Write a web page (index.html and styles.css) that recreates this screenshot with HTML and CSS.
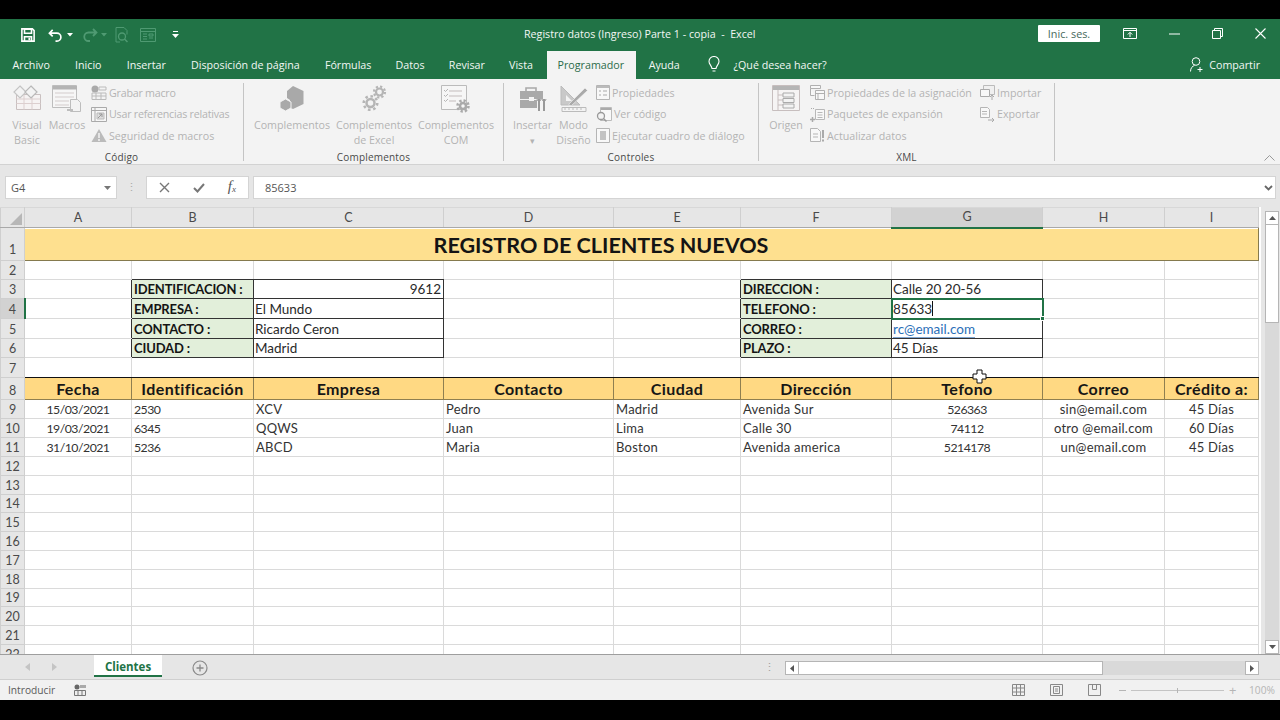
FILE: index.html
```html
<!DOCTYPE html>
<html lang="es">
<head>
<meta charset="utf-8">
<title>Registro datos (Ingreso) Parte 1 - copia - Excel</title>
<link rel="stylesheet" href="styles.css">
</head>
<body>
<div class="app">
  <header class="titlebar">
    <div class="qat">
      <svg class="q-save" width="14" height="14" viewBox="0 0 16 16"><path d="M1 1h12l2 2v12H1z" fill="none" stroke="#fff" stroke-width="1.8"/><path d="M4 1.500h8v4.500H4zM4 15v-5h8v5" fill="none" stroke="#fff" stroke-width="1.8"/><rect x="8.500" y="11" width="2" height="3" fill="#fff"/></svg>
      <svg class="q-undo" width="15" height="15" viewBox="0 0 16 16"><path d="M5 2 1.500 5.500 5 9M2 5.500h7.500a4 4 0 0 1 0 8.500H8" fill="none" stroke="#fff" stroke-width="1.800"/></svg>
      <svg class="q-arrow" width="6" height="4" viewBox="0 0 6 4"><path d="M0 0h6L3 3.500z" fill="#fff"/></svg>
      <svg class="q-redo" width="16" height="16" viewBox="0 0 16 16"><path d="M11 2l3.500 3.500L11 9M14 5.500H6.500a4 4 0 0 0 0 8.500H8" fill="none" stroke="#4f9a72" stroke-width="1.800"/></svg>
      <svg class="q-arrow2" width="6" height="4" viewBox="0 0 6 4"><path d="M0 0h6L3 3.500z" fill="#4f9a72"/></svg>
      <svg class="q-prev" width="14" height="16" viewBox="0 0 14 16"><path d="M1 .500h8l3 3v4M1 .500v14.500h4" fill="none" stroke="#4f9a72"/><circle cx="7" cy="9.500" r="3.500" fill="none" stroke="#4f9a72" stroke-width="1.300"/><path d="m9.500 12 3 3" stroke="#4f9a72" stroke-width="1.500"/></svg>
      <svg class="q-form" width="16" height="14" viewBox="0 0 16 14"><path d="M.5.500h15v13H.5zM.5 3.500h15M3 6h4M3 8.500h4M3 11h4M9 6h4v2H9zM9 10h4" fill="none" stroke="#4f9a72"/></svg>
      <svg class="q-cust" width="7" height="9" viewBox="0 0 7 9"><path d="M1 .500h5" stroke="#fff"/><path d="M0 3h7L3.500 7z" fill="#fff"/></svg>
    </div>
    <div class="doc-title">Registro datos (Ingreso) Parte 1 - copia &nbsp;-&nbsp; Excel</div>
    <div class="win">
      <span class="signin">Inic. ses.</span>
      <svg class="w-disp" width="14" height="11" viewBox="0 0 14 11"><path d="M.5.500h13v10H.5zM.5 2.500h13" fill="none" stroke="#fff"/><path d="M7 9V4.500M4.800 6.500 7 4.300l2.200 2.200" fill="none" stroke="#fff"/></svg>
      <svg class="w-min" width="11" height="2" viewBox="0 0 11 2"><path d="M0 1h11" stroke="#fff" stroke-width="1"/></svg>
      <svg class="w-res" width="11" height="11" viewBox="0 0 11 11"><path d="M.5 2.500h8v8h-8zM2.500 2.500v-2h8v8h-2" fill="none" stroke="#fff"/></svg>
      <svg class="w-close" width="11" height="11" viewBox="0 0 11 11"><path d="m.5.500 10 10M10.500.500l-10 10" stroke="#fff" stroke-width="1.100"/></svg>
    </div>
  </header>

  <nav class="tabs">
    <span class="tab">Archivo</span>
    <span class="tab">Inicio</span>
    <span class="tab">Insertar</span>
    <span class="tab">Disposición de página</span>
    <span class="tab">Fórmulas</span>
    <span class="tab pull">Datos</span>
    <span class="tab pull">Revisar</span>
    <span class="tab pull">Vista</span>
    <span class="tab active">Programador</span>
    <span class="tab">Ayuda</span>
    <svg class="bulb" width="12" height="17" viewBox="0 0 12 17"><path d="M4 12.500C4 10 1 8.500 1 5.500a5 5 0 0 1 10 0c0 3-3 4.500-3 7zM4.500 15h3" fill="none" stroke="#fff" stroke-width="1.100"/></svg>
    <span class="tell">¿Qué desea hacer?</span>
    <span class="share">
      <svg width="14" height="15" viewBox="0 0 14 15"><circle cx="6" cy="4.500" r="3.800" fill="none" stroke="#fff"/><path d="M.5 14.500c0-3.500 2-5.500 4-6M10 10v5M7.500 12.500h5" fill="none" stroke="#fff"/></svg>
      Compartir
    </span>
  </nav>

  <section class="ribbon">
    <div class="group g-codigo">
      <div class="body">
        <div class="large w40">
          <div class="lg-ic"><svg width="28" height="26" viewBox="0 0 28 26"><path d="M3.500 9.500h24v15h-24z" fill="#f6f3f3" stroke="#c9c0c0"/><path d="M3.500 14h24M3.500 18.500h24M11 9.500v15M19 9.500v15" stroke="#dccfcf"/><path d="m7 1 6 6-6 6-6-6z" fill="#f3f3f3" stroke="#c4c4c4" stroke-width="1.200"/><path d="m18 1 6 6-6 6-6-6z" fill="#f3f3f3" stroke="#b8b8b8" stroke-width="1.200"/></svg></div>
          <span>Visual<br>Basic</span>
        </div>
        <div class="large w40">
          <div class="lg-ic"><svg width="30" height="28" viewBox="0 0 30 28"><path d="M.5.500h24v22H.5z" fill="#f6f6f6" stroke="#bdbdbd"/><rect x="1" y="1" width="24" height="3.500" fill="#b4b4b4"/><path d="M3 8h19M3 12h19M3 16h14M3 20h14" stroke="#d3cccc"/><path d="M18.500 14.500h7l3 3v9h-10z" fill="#f3f3f3" stroke="#bdbdbd"/><path d="M15 25h6" stroke="#bdbdbd" stroke-width="2"/></svg></div>
          <span>Macros</span>
        </div>
        <div class="smalls m4">
          <div class="small tight"><svg width="16" height="15" viewBox="0 0 16 15"><circle cx="4" cy="4" r="3.500" fill="#aaa"/><path d="M8 2h7v3H8zM1 8h14v6.500H1zM1 11h14M5 8v6M10 8v6" fill="#f3f3f3" stroke="#bbb"/></svg><span>Grabar macro</span></div>
          <div class="small tight"><svg width="16" height="15" viewBox="0 0 16 15"><path d="M.5.500h15v14H.5zM.5 3.500h15M4 .500v14" fill="#f6f6f6" stroke="#aaa"/><path d="M6 6h7v6H6z" fill="#ddd" stroke="#bbb"/><path d="m7 11 4-4M8 7h3v3" fill="none" stroke="#999"/></svg><span>Usar referencias relativas</span></div>
          <div class="small"><svg width="16" height="15" viewBox="0 0 16 15"><path d="M8 1 15.500 14H.5z" fill="#bbb"/><path d="M8 5v5M8 11v2" stroke="#f3f3f3" stroke-width="1.500"/></svg><span>Seguridad de macros</span></div>
        </div>
      </div>
      <div class="g-label">Código</div>
    </div>

    <div class="group g-comp">
      <div class="body">
        <div class="large w82">
          <div class="lg-ic"><svg width="26" height="26" viewBox="0 0 26 26"><path d="M14 1 24.500 6v13L14 24l-3-1.500V15l-3-2V6z" fill="#a9a9a9"/><path d="M6.500 14 12 17v6l-5.500 3L1 23v-6z" fill="#a9a9a9" stroke="#f3f3f3"/></svg></div>
          <span>Complementos</span>
        </div>
        <div class="large w82">
          <div class="lg-ic"><svg width="26" height="28" viewBox="0 0 26 28"><g fill="none" stroke="#b5b5b5"><circle cx="18.500" cy="7" r="3.500" stroke-width="2.200"/><circle cx="18.500" cy="7" r="5.500" stroke-width="2.200" stroke-dasharray="2.200 2.100"/><circle cx="9.500" cy="18" r="4" stroke-width="2.500"/><circle cx="9.500" cy="18" r="6.800" stroke-width="2.500" stroke-dasharray="2.600 2.700"/></g></svg></div>
          <span>Complementos<br>de Excel</span>
        </div>
        <div class="large w82">
          <div class="lg-ic"><svg width="30" height="30" viewBox="0 0 30 30"><path d="M.5.500h25v24H.5z" fill="#f6f6f6" stroke="#bbb"/><path d="M8 6h13M8 11h13M8 16h7" stroke="#c3bcbc"/><path d="m3 5 1.500 1.500L7 4M3 10l1.500 1.500L7 9M3 15l1.500 1.500L7 14" fill="none" stroke="#b5b5b5"/><circle cx="22" cy="21" r="3" fill="none" stroke="#aaa" stroke-width="2.500"/><circle cx="22" cy="21" r="5.500" fill="none" stroke="#aaa" stroke-width="2.500" stroke-dasharray="2.300 2"/></svg></div>
          <span>Complementos<br>COM</span>
        </div>
      </div>
      <div class="g-label">Complementos</div>
    </div>

    <div class="group g-ctrl">
      <div class="body">
        <div class="large w38">
          <div class="lg-ic"><svg width="28" height="28" viewBox="0 0 28 28"><path d="M7 6V3h10v3" fill="none" stroke="#a9a9a9" stroke-width="1.600"/><path d="M1 6h23v8H1zM1 15h17v8H1z" fill="#a9a9a9"/><rect x="10" y="12" width="5" height="4" fill="#f3f3f3"/><path d="M20 14v12M25 14v12" stroke="#999" stroke-width="2"/><path d="M18 14a2 2 0 0 0 4 0M23 14a2 2 0 0 0 4 0" fill="none" stroke="#999"/></svg></div>
          <span>Insertar<br><em class="mini">▾</em></span>
        </div>
        <div class="large w38">
          <div class="lg-ic"><svg width="30" height="28" viewBox="0 0 30 28"><path d="M2 1v19h19z" fill="#c9c9c9" stroke="#bbb"/><path d="M7 10v6h6z" fill="#f3f3f3"/><path d="m10 19 16-16 2.500 2.500-16 15H10z" fill="#aaa" stroke="#f3f3f3" stroke-width=".6"/><path d="M3 22.500h24v4H3z" fill="#f3f3f3" stroke="#bbb"/><path d="M6 23v2M10 23v2M14 23v2M18 23v2M22 23v2" stroke="#bbb"/></svg></div>
          <span>Modo<br>Diseño</span>
        </div>
        <div class="smalls m3">
          <div class="small"><svg width="14" height="15" viewBox="0 0 14 15"><path d="M.5.500h13v14H.5z" fill="#f8f8f8" stroke="#b5b5b5"/><path d="M1 1h12v2H1z" fill="#bbb"/><path d="M3 6h2M3 10h2M7 6h4M7 10h4" stroke="#aaa"/></svg><span>Propiedades</span></div>
          <div class="small"><svg width="16" height="15" viewBox="0 0 16 15"><path d="M4.500.500h11v13h-11z" fill="#f8f8f8" stroke="#bbb"/><path d="M5 1h10v2H5z" fill="#aaa"/><circle cx="5" cy="9" r="3.500" fill="#f3f3f3" stroke="#999" stroke-width="1.300"/><path d="m7.500 11.500 3 3" stroke="#999" stroke-width="1.500"/></svg><span>Ver código</span></div>
          <div class="small"><svg width="14" height="15" viewBox="0 0 14 15"><path d="M.5.500h13v14H.5z" fill="#f8f8f8" stroke="#b5b5b5"/><path d="M4 3h6v9H4z" fill="#c3c3c3"/></svg><span>Ejecutar cuadro de diálogo</span></div>
        </div>
      </div>
      <div class="g-label">Controles</div>
    </div>

    <div class="group g-xml">
      <div class="body">
        <div class="large w34">
          <div class="lg-ic"><svg width="28" height="26" viewBox="0 0 28 26"><path d="M.5.500h27v25H.5z" fill="#f6f4f4" stroke="#c7bebe"/><path d="M1 1h26v4H1z" fill="#b5b5b5"/><path d="M6 5v20M6 10h5M6 15h5M6 20h5" stroke="#c7bebe"/><path d="M11 8h11v4H11zM11 13.500h11v4H11zM11 19h11v4H11z" fill="#f3f3f3" stroke="#aaa"/></svg></div>
          <span>Origen</span>
        </div>
        <div class="smalls m6 col-xml">
          <div class="small"><svg width="15" height="15" viewBox="0 0 15 15"><path d="M.5.500h10v3h-10zM.5 3.500v7h4M5.500 5.500h9v9h-9zM5.500 8.500h9M8 8.500v6" fill="#f8f8f8" stroke="#b0b0b0"/></svg><span>Propiedades de la asignación</span></div>
          <div class="small"><svg width="15" height="15" viewBox="0 0 15 15"><path d="M5.500 2.500h9v10h-9zM7.500 5.500h5M7.500 8h5M7.500 10.500h5" fill="#f8f8f8" stroke="#b8b8b8"/><path d="M0 12.500h5M2.500 10v5" stroke="#aaa" stroke-width="1.500"/><path d="M1 1.500h3" stroke="#aaa" stroke-dasharray="1 1"/></svg><span>Paquetes de expansión</span></div>
          <div class="small"><svg width="15" height="15" viewBox="0 0 15 15"><path d="M.5.500h7l3 3v10h-10z" fill="#f8f8f8" stroke="#b5b5b5"/><path d="M3 6h5M3 9h5" stroke="#b5b5b5"/><path d="M13 2v8M13 11.500v2" stroke="#aaa" stroke-width="2"/></svg><span>Actualizar datos</span></div>
        </div>
        <div class="smalls col-imp">
          <div class="small"><svg width="15" height="15" viewBox="0 0 15 15"><path d="M3.500.500h11v9h-11z" fill="#f0f0f0" stroke="#bbb"/><path d="M.5 4.500h9v7h-9z" fill="#f8f8f8" stroke="#aaa"/><path d="M12 15v-5M10 12l2-2 2 2" fill="none" stroke="#aaa"/></svg><span>Importar</span></div>
          <div class="small"><svg width="15" height="15" viewBox="0 0 15 15"><path d="M.5.500h7l2 2v8h-9z" fill="#f8f8f8" stroke="#b5b5b5"/><path d="M2 4.500h5M2 7h5" stroke="#b5b5b5"/><path d="M8 13h6M12 11l2 2-2 2" fill="none" stroke="#aaa"/></svg><span>Exportar</span></div>
        </div>
      </div>
      <div class="g-label">XML</div>
    </div>
    <svg class="collapse" width="11" height="6" viewBox="0 0 11 6"><path d="m.5 5.500 5-5 5 5" fill="none" stroke="#999"/></svg>
  </section>

  <section class="formula">
    <div class="namebox"><span>G4</span><svg width="7" height="4" viewBox="0 0 7 4"><path d="M0 0h7L3.500 4z" fill="#777"/></svg></div>
    <div class="grip">⋮</div>
    <div class="fx-btns">
      <svg width="11" height="11" viewBox="0 0 11 11"><path d="m1 1 9 9M10 1l-9 9" stroke="#777" stroke-width="1.400"/></svg>
      <svg width="12" height="10" viewBox="0 0 12 10"><path d="m1 5 3.500 3.500L11 1" fill="none" stroke="#777" stroke-width="2"/></svg>
      <span class="fx">f<sub>x</sub></span>
    </div>
    <div class="fx-input"><span>85633</span><svg width="9" height="6" viewBox="0 0 9 6"><path d="m1 1 3.500 3.500L8 1" fill="none" stroke="#666" stroke-width="1.800"/></svg></div>
  </section>

  <main class="sheetwrap">
    <div class="sheet">
      <table class="grid">
        <colgroup>
          <col class="c0"><col class="ca"><col class="cb"><col class="cc"><col class="cd"><col class="ce"><col class="cf"><col class="cg"><col class="ch"><col class="ci">
        </colgroup>
        <tr class="heads"><th class="corner"><svg width="12" height="12" viewBox="0 0 12 12"><path d="M12 0v12H0z" fill="#b7b7b7"/></svg></th><th>A</th><th>B</th><th>C</th><th>D</th><th>E</th><th>F</th><th class="sel-col">G</th><th>H</th><th>I</th></tr>
        <tr class="r1"><th>1</th><td class="banner" colspan="9">REGISTRO DE CLIENTES NUEVOS</td></tr>
        <tr class="r19"><th>2</th><td></td><td class="bb"></td><td class="bb"></td><td></td><td></td><td class="bb"></td><td class="bb"></td><td></td><td></td></tr>
        <tr class="r19"><th>3</th><td class="br"></td><td class="lbl">IDENTIFICACION :</td><td class="val num">9612</td><td></td><td class="br"></td><td class="lbl">DIRECCION :</td><td class="val">Calle 20 20-56</td><td></td><td></td></tr>
        <tr class="r20"><th class="sel-row">4</th><td class="br"></td><td class="lbl">EMPRESA :</td><td class="val">El Mundo</td><td></td><td class="br"></td><td class="lbl">TELEFONO :</td><td class="val active-cell">85633<i class="caret"></i><i class="handle"></i></td><td></td><td></td></tr>
        <tr class="r20"><th>5</th><td class="br"></td><td class="lbl">CONTACTO :</td><td class="val">Ricardo Ceron</td><td></td><td class="br"></td><td class="lbl">CORREO :</td><td class="val"><a class="link">rc@email.com</a></td><td></td><td></td></tr>
        <tr class="r19"><th>6</th><td class="br"></td><td class="lbl">CIUDAD :</td><td class="val">Madrid</td><td></td><td class="br"></td><td class="lbl">PLAZO :</td><td class="val">45 Días</td><td></td><td></td></tr>
        <tr class="r20 r7"><th>7</th><td></td><td></td><td></td><td></td><td></td><td></td><td></td><td></td><td></td></tr>
        <tr class="r22"><th>8</th><td class="hd">Fecha</td><td class="hd">Identificación</td><td class="hd">Empresa</td><td class="hd">Contacto</td><td class="hd">Ciudad</td><td class="hd">Dirección</td><td class="hd">Tefono</td><td class="hd">Correo</td><td class="hd">Crédito a:</td></tr>
        <tr class="r19 data"><th>9</th><td class="ctr nm">15/03/2021</td><td class="nm">2530</td><td>XCV</td><td>Pedro</td><td>Madrid</td><td>Avenida Sur</td><td class="ctr nm">526363</td><td class="ctr">sin@email.com</td><td class="ctr">45 Días</td></tr>
        <tr class="r19 data"><th>10</th><td class="ctr nm">19/03/2021</td><td class="nm">6345</td><td>QQWS</td><td>Juan</td><td>Lima</td><td>Calle 30</td><td class="ctr nm">74112</td><td class="ctr">otro @email.com</td><td class="ctr">60 Días</td></tr>
        <tr class="r19 data"><th>11</th><td class="ctr nm">31/10/2021</td><td class="nm">5236</td><td>ABCD</td><td>Maria</td><td>Boston</td><td>Avenida america</td><td class="ctr nm">5214178</td><td class="ctr">un@email.com</td><td class="ctr">45 Días</td></tr>
        <tr class="r19"><th>12</th><td></td><td></td><td></td><td></td><td></td><td></td><td></td><td></td><td></td></tr>
        <tr class="r19"><th>13</th><td></td><td></td><td></td><td></td><td></td><td></td><td></td><td></td><td></td></tr>
        <tr class="r18"><th>14</th><td></td><td></td><td></td><td></td><td></td><td></td><td></td><td></td><td></td></tr>
        <tr class="r19"><th>15</th><td></td><td></td><td></td><td></td><td></td><td></td><td></td><td></td><td></td></tr>
        <tr class="r19"><th>16</th><td></td><td></td><td></td><td></td><td></td><td></td><td></td><td></td><td></td></tr>
        <tr class="r19"><th>17</th><td></td><td></td><td></td><td></td><td></td><td></td><td></td><td></td><td></td></tr>
        <tr class="r19"><th>18</th><td></td><td></td><td></td><td></td><td></td><td></td><td></td><td></td><td></td></tr>
        <tr class="r18"><th>19</th><td></td><td></td><td></td><td></td><td></td><td></td><td></td><td></td><td></td></tr>
        <tr class="r19"><th>20</th><td></td><td></td><td></td><td></td><td></td><td></td><td></td><td></td><td></td></tr>
        <tr class="r19"><th>21</th><td></td><td></td><td></td><td></td><td></td><td></td><td></td><td></td><td></td></tr>
        <tr class="r19"><th>22</th><td></td><td></td><td></td><td></td><td></td><td></td><td></td><td></td><td></td></tr>
      </table>
      <svg class="cursor" width="15" height="15" viewBox="0 0 15 15"><path d="M5 1h5v4h4v5h-4v4H5v-4H1V5h4z" fill="#fff" stroke="#111"/></svg>
    </div>
    <aside class="vscroll">
      <div class="sb-btn"><svg width="7" height="4" viewBox="0 0 7 4"><path d="M0 4h7L3.500 0z" fill="#555"/></svg></div>
      <div class="sb-thumb"></div>
      <div class="sb-track"></div>
      <div class="sb-btn"><svg width="7" height="4" viewBox="0 0 7 4"><path d="M0 0h7L3.500 4z" fill="#555"/></svg></div>
    </aside>
  </main>

  <section class="sheetbar">
    <div class="nav">
      <svg width="5" height="8" viewBox="0 0 5 8"><path d="M5 0v8L0 4z" fill="#c4c4c4"/></svg>
      <svg width="5" height="8" viewBox="0 0 5 8"><path d="M0 0v8l5-4z" fill="#c4c4c4"/></svg>
    </div>
    <div class="sheet-tab">Clientes</div>
    <svg class="add" width="16" height="16" viewBox="0 0 16 16"><circle cx="8" cy="8" r="7" fill="none" stroke="#8a8a8a" stroke-width="1.200"/><path d="M4.500 8h7M8 4.500v7" stroke="#8a8a8a" stroke-width="1.300"/></svg>
    <div class="grip2">⋮</div>
    <div class="hscroll">
      <div class="sb-btn h"><svg width="4" height="7" viewBox="0 0 4 7"><path d="M4 0v7L0 3.500z" fill="#555"/></svg></div>
      <div class="hs-thumb"></div>
      <div class="hs-track"></div>
      <div class="sb-btn h"><svg width="4" height="7" viewBox="0 0 4 7"><path d="M0 0v7l4-3.500z" fill="#555"/></svg></div>
    </div>
  </section>

  <footer class="status">
    <span class="mode">Introducir</span>
    <svg class="st-ic" width="12" height="12" viewBox="0 0 12 12"><circle cx="3" cy="3" r="2.500" fill="#666"/><path d="M6 1h6v3H6z" fill="#aaa"/><path d="M.5 6.500h11v5H.5zM4 6.500v5M8 6.500v5" fill="#eee" stroke="#777"/></svg>
    <div class="views">
      <svg width="13" height="12" viewBox="0 0 13 12"><path d="M.5.500h12v11H.5zM.5 4h12M.5 8h12M4.500.500v11M8.500.500v11" fill="none" stroke="#888"/></svg>
      <svg width="13" height="12" viewBox="0 0 13 12"><path d="M.5.500h12v11H.5z" fill="none" stroke="#888"/><path d="M3.500 2.500h6v7h-6zM5 5h3M5 7h3" fill="none" stroke="#888"/></svg>
      <svg width="13" height="12" viewBox="0 0 13 12"><path d="M.5.500h12v11H.5zM4.500.500v5h4v-5" fill="none" stroke="#888"/></svg>
    </div>
    <div class="zoom">
      <i class="z-minus"></i>
      <div class="z-track"><i class="z-tick"></i></div>
      <span class="z-plus">+</span>
      <span class="z-val">100%</span>
    </div>
  </footer>
</div>
</body>
</html>
```
FILE: styles.css
```css
* { box-sizing: border-box; }
html, body { margin: 0; height: 100%; }
body { background: #000; overflow: hidden; font-family: "Open Sans", "Noto Sans", sans-serif; }
.app { width: 1280px; height: 681px; margin-top: 19px; display: flex; flex-direction: column; background: #e6e6e6; }
svg { display: block; flex: none; }

/* title bar */
.titlebar { height: 32px; background: #217346; display: flex; align-items: center; color: #fff; flex: none; }
.qat { width: 524px; display: flex; align-items: center; padding-left: 21px; flex: none; }
.q-undo { margin-left: 13px; }
.q-arrow { margin-left: 4px; }
.q-redo { margin-left: 9px; }
.q-arrow2 { margin-left: 3px; }
.q-prev { margin-left: 8px; }
.q-form { margin-left: 11px; }
.q-cust { margin-left: 16px; }
.doc-title { font-size: 10.700px; flex: 1; color: #f2f7f4; white-space: nowrap; margin-bottom: 3px; }
.win { display: flex; align-items: center; flex: none; padding-right: 14px; margin-bottom: 3px; }
.signin { width: 62px; height: 17px; background: #fff; color: #46685a; font-size: 10.800px; line-height: 17px; text-align: center; border-radius: 1px; }
.w-disp { margin-left: 23px; }
.w-min { margin-left: 32px; }
.w-res { margin-left: 32px; }
.w-close { margin-left: 32px; }

/* tabs */
.tabs { height: 28px; background: #217346; display: flex; align-items: stretch; color: #f2f7f4; font-size: 10.700px; flex: none; }
.tab { padding: 0 12.600px 1px; display: flex; align-items: center; white-space: nowrap; }
.tab.pull { margin-left: -1px; }
.tab.active { background: #f3f3f3; color: #2b6b4a; padding: 0 12px 1px 11px; margin: 0 0 0 1px; }
.bulb { align-self: center; margin: 0 0 1px 16px; }
.tell { margin-left: 13px; display: flex; align-items: center; padding-bottom: 1px; }
.share { margin-left: auto; padding: 0 20px 1px 0; display: flex; align-items: center; gap: 5px; }

/* ribbon */
.ribbon { height: 86px; padding-top: 4px; background: #f3f3f3; border-bottom: 1px solid #d2d2d2; display: flex; position: relative; flex: none; color: #b3b3b3; font-size: 10.700px; }
.group { height: 78px; border-right: 1px solid #c4c4c4; display: flex; flex-direction: column; flex: none; }
.g-codigo { width: 244px; padding-left: 7px; }
.g-comp { width: 260px; padding-left: 7px; }
.g-ctrl { width: 255px; padding-left: 8px; }
.g-xml { width: 296px; padding-left: 10px; }
.body { height: 67px; display: flex; flex: none; }
.g-label { height: 14px; line-height: 14px; flex: none; font-size: 10px; letter-spacing: .2px; color: #4a4a4a; text-align: center; }
.g-codigo .g-label { margin-left: -7px; }
.g-comp .g-label { margin-left: -7px; }
.g-ctrl .g-label { margin-left: -8px; }
.g-xml .g-label { margin-left: -10px; }
.large { text-align: center; line-height: 14.500px; flex: none; white-space: nowrap; }
.w40 { width: 40px; }
.w82 { width: 82px; }
.w38 { width: 41px; }
.w34 { width: 34px; }
.lg-ic { height: 35px; padding-top: 2px; display: flex; justify-content: center; }
.mini { font-style: normal; font-size: 9px; line-height: 10px; }
.smalls { margin-top: -1px; flex: none; }
.m4 { margin-left: 4px; }
.m3 { margin-left: 2px; }
.m6 { margin-left: 7px; }
.small { height: 21.500px; display: flex; align-items: center; gap: 2px; white-space: nowrap; }
.tight { letter-spacing: -.23px; }
.col-xml { width: 170px; }
.collapse { position: absolute; right: 5px; top: 76px; }

/* formula bar */
.formula { height: 42px; padding: 11px 4px 8px 5px; background: #e6e6e6; display: flex; align-items: stretch; flex: none; font-size: 11px; color: #555; }
.namebox { width: 112px; background: #fff; border: 1px solid #d4d4d4; display: flex; align-items: center; justify-content: space-between; padding: 0 5px 0 5px; }
.grip { width: 29px; text-align: center; color: #aaa; line-height: 22px; }
.fx-btns { width: 103px; background: #fff; border: 1px solid #d4d4d4; display: flex; align-items: center; justify-content: space-between; padding: 0 12px; }
.fx { font-family: "Liberation Serif", serif; font-style: italic; font-size: 15px; color: #555; line-height: 15px; }
.fx sub { font-size: 9px; vertical-align: -1px; }
.fx-input { margin-left: 4px; flex: 1; background: #fff; border: 1px solid #d4d4d4; display: flex; align-items: center; justify-content: space-between; padding: 0 2px 0 11px; }

/* sheet */
.sheetwrap { height: 448px; display: flex; flex: none; background: #e6e6e6; border-bottom: 1px solid #9e9e9e; }
.sheet { width: 1261px; height: 447px; background: #fff; overflow: hidden; position: relative; flex: none; }
.grid { width: 1258px; table-layout: fixed; border-collapse: collapse; font-family: Lato, "Liberation Sans", sans-serif; font-size: 13px; color: #222; }
.c0 { width: 24px; } .ca { width: 107px; } .cb { width: 122px; } .cc { width: 190px; } .cd { width: 170px; } .ce { width: 127px; } .cf { width: 151px; } .cg { width: 151px; } .ch { width: 122px; } .ci { width: 94px; }
.grid th { background: #e6e6e6; font-weight: 400; color: #4a4a4a; font-size: 12.500px; padding: 0; border: 1px solid #cfcfcf; border-top-color: #d8d8d8; text-align: center; overflow: hidden; vertical-align: bottom; line-height: 16px; }
.grid td { border: 1px solid #dadada; padding: 0 2px; vertical-align: bottom; line-height: 17px; white-space: nowrap; overflow: hidden; }
.heads { height: 20px; }
.heads th { vertical-align: middle; line-height: 18px; border-bottom-color: #a9a9a9; }
.corner svg { margin: 2px 0 0 9px; }
.sel-col { background: #d2d2d2 !important; border-bottom: 2px solid #217346 !important; }
.sel-row { background: #d2d2d2 !important; border-right: 2px solid #217346 !important; }
.r1 { height: 33px; } .r18 { height: 18px; } .r19 { height: 19px; } .r20 { height: 20px; } .r22 { height: 22px; }
.r1 th { padding-bottom: 2px; }
.r7 td { border-bottom-color: #111; }
.grid td.bb { border-bottom-color: #333; }
.grid td.br { border-right-color: #333; }
.grid .banner { background: #fee08f; text-align: center; font-size: 21.550px; font-weight: 700; color: #141414; vertical-align: middle; padding: 1px 83px 0 2px; border: 1px solid #857a4e; line-height: 26px; }
.grid .lbl { background: #e2efda; font-weight: 700; font-size: 13px; letter-spacing: -.15px; color: #141414; border: 1px solid #333; }
.grid .val { background: #fff; font-size: 13.500px; color: #2a2a2a; border: 1px solid #333; padding: 0 1px; }
.grid .num { text-align: right; padding-right: 2px; }
.grid .hd { background: #ffd983; font-weight: 700; font-size: 16px; letter-spacing: .4px; color: #161616; text-align: center; border: 1px solid #8f7f50; line-height: 20px; }
.data td { font-size: 13px; letter-spacing: .25px; color: #333; }
.data td.nm { font-size: 12.300px; letter-spacing: -.52px; }
.ctr { text-align: center; }
.link { color: #2b6fb8; border-bottom: 1px solid #7fa6d2; }
.grid .active-cell { position: relative; overflow: visible; outline: 2px solid #217346; outline-offset: -1px; }
.caret { display: inline-block; width: 1px; height: 15px; background: #111; vertical-align: -2px; }
.handle { position: absolute; right: -3px; bottom: -3px; width: 5px; height: 5px; background: #217346; border: 1px solid #fff; }
.cursor { position: absolute; left: 972px; top: 162px; }

/* scrollbars */
.vscroll { width: 19px; padding: 4px 1px 0 4px; display: flex; flex-direction: column; background: #e6e6e6; flex: none; }
.sb-btn { width: 14px; height: 14px; background: #fff; border: 1px solid #b5b5b5; display: flex; align-items: center; justify-content: center; flex: none; }
.sb-thumb { height: 98px; background: #fff; border: 1px solid #b5b5b5; border-top: none; flex: none; }
.sb-track { flex: 1; background: #d9d9d9; }

.sheetbar { height: 25px; background: #e6e6e6; border-bottom: 1px solid #cfcfcf; display: flex; flex: none; position: relative; }
.nav { width: 94px; padding: 8px 0 0 25px; display: flex; gap: 22px; }
.sheet-tab { width: 68px; height: 22px; background: #fff; border-bottom: 2px solid #217346; color: #217346; font-weight: 700; font-size: 11.500px; text-align: center; line-height: 23px; }
.add { margin: 5px 0 0 30px; }
.grip2 { margin-left: 553px; width: 16px; text-align: center; color: #a0a0a0; font-size: 11px; line-height: 24px; }
.hscroll { position: absolute; left: 785px; top: 6px; width: 474px; height: 14px; display: flex; background: #d9d9d9; }
.sb-btn.h { width: 14px; height: 14px; }
.hs-thumb { width: 304px; background: #fff; border: 1px solid #b5b5b5; border-left: none; }
.hs-track { flex: 1; }

/* status bar */
.status { height: 20px; background: #f1f1f1; display: flex; align-items: center; flex: none; font-size: 10.200px; color: #5a5a5a; padding-left: 8px; position: relative; }
.mode { width: 66px; }
.views { display: flex; gap: 25px; margin-left: 926px; }
.zoom { display: flex; align-items: center; margin-left: 18px; color: #b5b5b5; }
.z-minus { width: 7px; height: 1px; background: #b5b5b5; }
.z-track { width: 93px; height: 1px; background: #c4c4c4; margin-left: 5px; position: relative; }
.z-tick { position: absolute; left: 46px; top: -2px; width: 1px; height: 5px; background: #b5b5b5; }
.z-plus { margin-left: 5px; font-size: 13px; line-height: 14px; width: 13px; }
.z-val { margin-left: 7px; }
```
